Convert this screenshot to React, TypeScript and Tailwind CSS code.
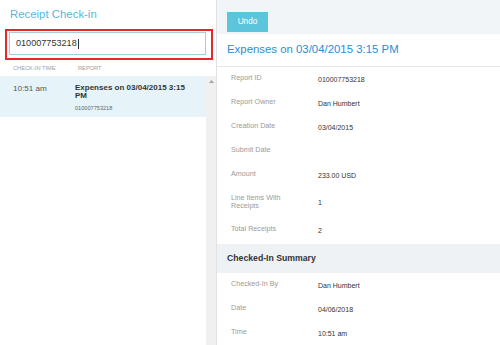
import React from 'react';

const reportRows = [
  { label: 'Report ID', value: '010007753218' },
  { label: 'Report Owner', value: 'Dan Humbert' },
  { label: 'Creation Date', value: '03/04/2015' },
  { label: 'Submit Date', value: '' },
  { label: 'Amount', value: '233.00 USD' },
];

const summaryRows = [
  { label: 'Checked-In By', value: 'Dan Humbert' },
  { label: 'Date', value: '04/06/2018' },
  { label: 'Time', value: '10:51 am' },
];

const DetailRow = ({ label, value }: { label: string; value: string }) => (
  <div className="flex h-[24px]">
    <div className="w-[101px] shrink-0 pl-[14px] pt-[7px] text-[7.2px] leading-[8px] text-[#9a9a9a]">{label}</div>
    <div className="pt-[9px] text-[7px] leading-[8px] text-[#333]">{value}</div>
  </div>
);

export default function App() {
  return (
    <div className="flex h-[345px] w-[500px] overflow-hidden bg-white font-['Liberation_Sans',Arial,sans-serif]">
      {/* Left: check-in list */}
      <div className="flex w-[217px] shrink-0 flex-col border-r border-[#e2e2e2]">
        <div className="h-[29px] pl-[10px] pt-[8px] text-[11.4px] leading-[12px] text-[#5cb6d9]">Receipt Check-in</div>

        <div className="ml-[5px] h-[31px] w-[208px] border-2 border-[#e5282a] pb-[3px] pl-[2px] pr-[5px] pt-[1px]">
          <div className="flex h-full items-center border border-[#9dd2dc] bg-white pl-[6px] text-[9.1px] text-[#333]">
            010007753218
            <span className="ml-[1px] inline-block h-[10px] w-px bg-[#333]" />
          </div>
        </div>

        <div className="relative h-[16px] text-[5.7px] uppercase leading-[16px] text-[#a0a0a0]">
          <span className="absolute left-[13px]">Check-in Time</span>
          <span className="absolute left-[78px]">Report</span>
        </div>

        <div className="flex flex-1">
          <div className="flex-1">
            <div className="flex h-[41px] bg-[#e6f4f9] pt-[7.5px]">
              <div className="w-[75px] shrink-0 pl-[13px] text-[8.1px] leading-[9px] text-[#555]">10:51 am</div>
              <div className="w-[118px]">
                <div className="text-[8px] font-bold leading-[8.5px] text-[#333]">Expenses on 03/04/2015 3:15 PM</div>
                <div className="mt-[4px] text-[5.6px] leading-[7px] text-[#666]">010007753218</div>
              </div>
            </div>
          </div>
          <div className="flex w-[10px] flex-col items-center bg-[#f0f0f0] pt-[4px]">
            <svg width="5" height="3" viewBox="0 0 5 3">
              <path d="M0 3 L2.5 0 L5 3 Z" fill="#a3a3a3" />
            </svg>
          </div>
        </div>
      </div>

      {/* Right: report details */}
      <div className="flex flex-1 flex-col">
        <div className="h-[34px] bg-[#f2f5f8] pl-[10px] pt-[7px]">
          <button className="h-[20px] w-[41px] bg-[#5bc6db] text-[8.2px] text-white">Undo</button>
        </div>

        <div className="flex h-[33px] items-center border-b border-[#e6e6e6] pl-[10px] text-[11.4px] text-[#2a8dd4]">
          Expenses on 03/04/2015 3:15 PM
        </div>

        {reportRows.map((r) => (
          <DetailRow key={r.label} label={r.label} value={r.value} />
        ))}

        <div className="flex h-[31px]">
          <div className="w-[101px] shrink-0 pl-[14px] pt-[7px] text-[7.2px] leading-[8px] text-[#9a9a9a]">
            Line Items With
            <br />
            Receipts
          </div>
          <div className="pt-[12px] text-[7px] leading-[8px] text-[#333]">1</div>
        </div>

        <DetailRow label="Total Receipts" value="2" />

        <div className="mt-[2px] flex h-[29px] items-center bg-[#eef2f5] pl-[10px] text-[8.7px] font-bold text-[#333]">
          Checked-In Summary
        </div>

        {summaryRows.map((r) => (
          <DetailRow key={r.label} label={r.label} value={r.value} />
        ))}
      </div>
    </div>
  );
}
